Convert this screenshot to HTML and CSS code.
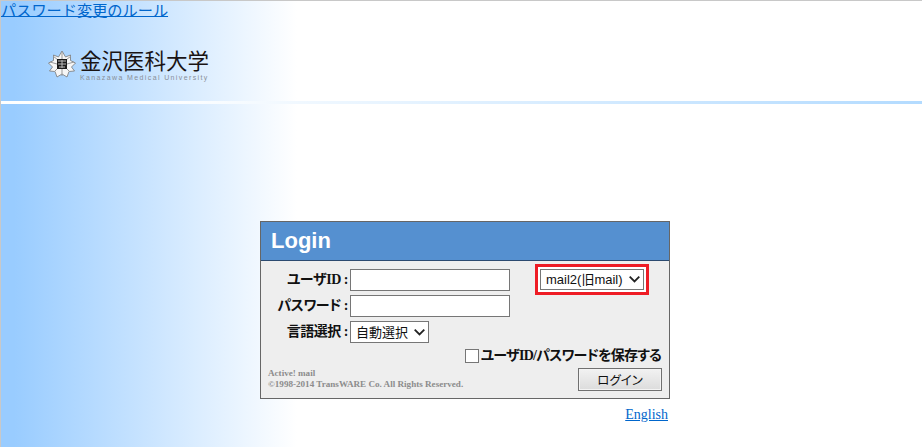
FILE: index.html
```html
<!DOCTYPE html>
<html lang="ja">
<head>
<meta charset="utf-8">
<title>Login</title>
<link rel="stylesheet" href="styles.css">
</head>
<body>
<header class="masthead">
  <a class="rule-link" href="#">パスワード変更のルール</a>
  <div class="logo">
    <svg class="emblem" width="28" height="28" viewBox="0 0 28 28">
      <path d="M14 1l3.500 6 5-2 0 5.500 5 2.500-4 4 3 4-5.500 .5-2 5.500-5-3-5 3-2-5.500-5.500-.5 3-4-4-4 5-2.500 0-5.500 5 2z" fill="#f6f6f6" stroke="#777" stroke-width=".8"/>
      <path d="M14 2v7M14 19v7M2 12l7 2M26 12l-7 2M5 6l5 4M23 6l-5 4M6 22l4-4M22 22l-4-4" stroke="#999" stroke-width="1"/>
      <rect x="9" y="9" width="10" height="10" fill="#1c1c1c"/>
      <path d="M10 11h8M10 14h8M14 10v8M11 17h6" stroke="#bbb" stroke-width="1"/>
    </svg>
    <div class="logo-text">
      <div class="logo-ja">金沢医科大学</div>
      <div class="logo-en">Kanazawa Medical University</div>
    </div>
  </div>
</header>
<div class="band"></div>
<main class="center">
  <form class="login">
    <h1 class="login-title">Login</h1>
    <div class="login-body">
      <div class="fields">
        <label class="lbl">ユーザ<b class="latin">ID</b> :</label>
        <input class="txt" type="text">
        <div class="server-wrap"><select class="sel server"><option>mail2(旧mail)</option></select></div>
        <label class="lbl">パスワード :</label>
        <input class="txt" type="password">
        <span></span>
        <label class="lbl">言語選択 :</label>
        <div><select class="sel lang"><option>自動選択</option></select></div>
        <span></span>
      </div>
      <div class="save"><span class="check"></span><span>ユーザ<b class="latin">ID/</b>パスワードを保存する</span></div>
      <div class="foot">
        <div class="copy">Active! mail<br>©1998-2014 TransWARE Co. All Rights Reserved.</div>
        <button class="btn" type="button">ログイン</button>
      </div>
    </div>
  </form>
  <div class="lang-link"><a href="#">English</a></div>
</main>
</body>
</html>
```
FILE: styles.css
```css
* { box-sizing: border-box; }
html, body { height: 100%; }
body {
  margin: 0;
  overflow: hidden;
  background: linear-gradient(90deg, #99ccff 0, #99ccff 14px, #ffffff 297px) no-repeat #fff;
  border-top: 1px solid #c8c8c8;
  border-left: 1px solid #c8c8c8;
}
.masthead { height: 100px; }
.rule-link {
  display: block;
  font: 15.2px/16px "Noto Sans CJK JP", sans-serif;
  text-decoration-thickness: 1px;
  text-underline-offset: 0;
  white-space: nowrap;
  color: #0066cc;
}
.logo { display: flex; align-items: flex-start; gap: 4px; margin: 30px 0 0 47px; }
.emblem { margin-top: 3px; flex: none; }
.logo-text { color: #1a1414; width: 130px; }
.logo-ja { font: 21.5px/26px "Noto Sans CJK JP", sans-serif; white-space: nowrap; }
.logo-en { font: 7px/9px "Liberation Sans", sans-serif; letter-spacing: 1.38px; color: #8a8f98; white-space: nowrap; }
.band { height: 3px; background: linear-gradient(90deg, #fff 0, #fff 150px, #b3dbff 100%); }
.center { width: 410px; margin: 117px 0 0 259px; }
.login { display: block; border: 1px solid #666; background: #eeeeee; height: 178px; }
.login-title {
  margin: 0;
  height: 39px;
  background: #5590d0;
  border-bottom: 1px solid #2c4a70;
  color: #fff;
  font: bold 22px/38px "Liberation Sans", sans-serif;
  padding-left: 10px;
}
.login-body { padding: 8px 7px 0 7px; }
.fields {
  display: grid;
  grid-template-columns: 82px 160px 1fr;
  grid-auto-rows: 22px;
  row-gap: 4px;
  align-items: start;
}
.lbl {
  text-align: right;
  padding-right: 2px;
  font: bold 14px/22px "Liberation Serif", "Noto Sans CJK JP", serif;
  font-feature-settings: "palt" 1;
  letter-spacing: -0.5px;
  color: #111;
  white-space: nowrap;
}
.latin { font-family: "Liberation Serif", serif; }
.txt { width: 160px; height: 22px; border: 1px solid #767676; background: #fff; padding: 0 2px; margin: 0; display: block; }
.server-wrap {
  position: relative;
  justify-self: start;
  margin-left: 25px;
  margin-top: -5px;
  border: 3px solid #ee1c25;
  padding: 2px;
  background: #fff;
}
.sel {
  display: block;
  height: 21px;
  appearance: none;
  background: #fff url("data:image/svg+xml,%3Csvg xmlns='http://www.w3.org/2000/svg' width='11' height='7'%3E%3Cpath d='M.7.7l4.800 4.800 4.800-4.800' fill='none' stroke='%23222' stroke-width='1.800'/%3E%3C/svg%3E") no-repeat right 3px center;
  border: 1px solid #767676;
  color: #111;
  font: 13px "Liberation Sans", "Noto Sans CJK JP", sans-serif;
  padding: 0 0 0 5px;
  border-radius: 0;
}
.server { width: 104px; }
.lang { width: 79px; height: 22px; }
.save {
  display: flex;
  justify-content: flex-end;
  align-items: center;
  gap: 2px;
  margin-top: 4px;
  padding-right: 1px;
  font: bold 14px/18px "Liberation Serif", "Noto Sans CJK JP", serif;
  font-feature-settings: "palt" 1;
  letter-spacing: -0.8px;
  color: #111;
  white-space: nowrap;
}
.check { width: 14px; height: 14px; border: 1px solid #767676; background: #fff; }
.foot { display: flex; justify-content: space-between; align-items: flex-end; margin-top: 3px; }
.copy { font: bold 9.1px/11px "Liberation Serif", serif; color: #8c8c8c; white-space: nowrap; margin-bottom: 1px; }
.btn {
  width: 84px;
  height: 23px;
  border: 1px solid #707070;
  box-shadow: inset 0 0 0 1px #f4f4f4;
  background: linear-gradient(#f2f2f2, #dcdcdc);
  font: 12.5px "Noto Sans CJK JP", sans-serif;
  font-feature-settings: "palt" 1;
  color: #111;
  padding: 0;
}
.lang-link { text-align: right; padding-right: 2px; margin-top: 7px; font: 14px/18px "Liberation Serif", serif; }
.lang-link a { color: #0066cc; }
```
